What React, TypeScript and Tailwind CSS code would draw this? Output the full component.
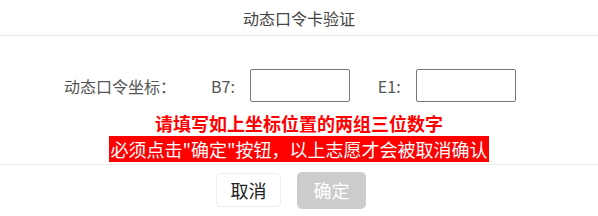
import React from 'react';

const App = () => {
    return (
        <div className="w-[598px] h-[216px] bg-white font-['Noto_Sans_CJK_SC','Noto_Sans',sans-serif] overflow-hidden">
            {/* Header */}
            <div className="h-[36px] border-b border-[#e8e8e8] flex items-center justify-center">
                <span className="text-[16px] text-[#444] leading-none">动态口令卡验证</span>
            </div>

            {/* Body */}
            <div className="h-[128px] pt-[33px]">
                <div className="flex items-center pl-[64px] h-[33px] text-[16px] text-[#555]">
                    <span>动态口令坐标：</span>
                    <span className="ml-[35px]">B7:</span>
                    <input className="ml-[15px] w-[100px] h-[33px] border border-[#777] rounded-[2px] outline-none" />
                    <span className="ml-[28px]">E1:</span>
                    <input className="ml-[15px] w-[100px] h-[33px] border border-[#777] rounded-[2px] outline-none" />
                </div>
                <div className="mt-[8px] text-center text-[18px] leading-[26px]">
                    <p className="font-bold text-[#ff0000]">请填写如上坐标位置的两组三位数字</p>
                    <p>
                        <span className="bg-[#ff0000] text-white px-[1px]">必须点击"确定"按钮，以上志愿才会被取消确认</span>
                    </p>
                </div>
            </div>

            {/* Footer */}
            <div className="h-[52px] border-t border-[#ececec] flex items-center justify-center gap-[16px] pr-[16px] pb-[1px]">
                <button className="w-[65px] h-[34px] border border-[#eee] rounded-[4px] bg-white text-[18px] text-[#222]">
                    取消
                </button>
                <button className="w-[69px] h-[37px] rounded-[5px] bg-[#cccccc] text-[18px] text-white">
                    确定
                </button>
            </div>
        </div>
    );
};

export default App;
